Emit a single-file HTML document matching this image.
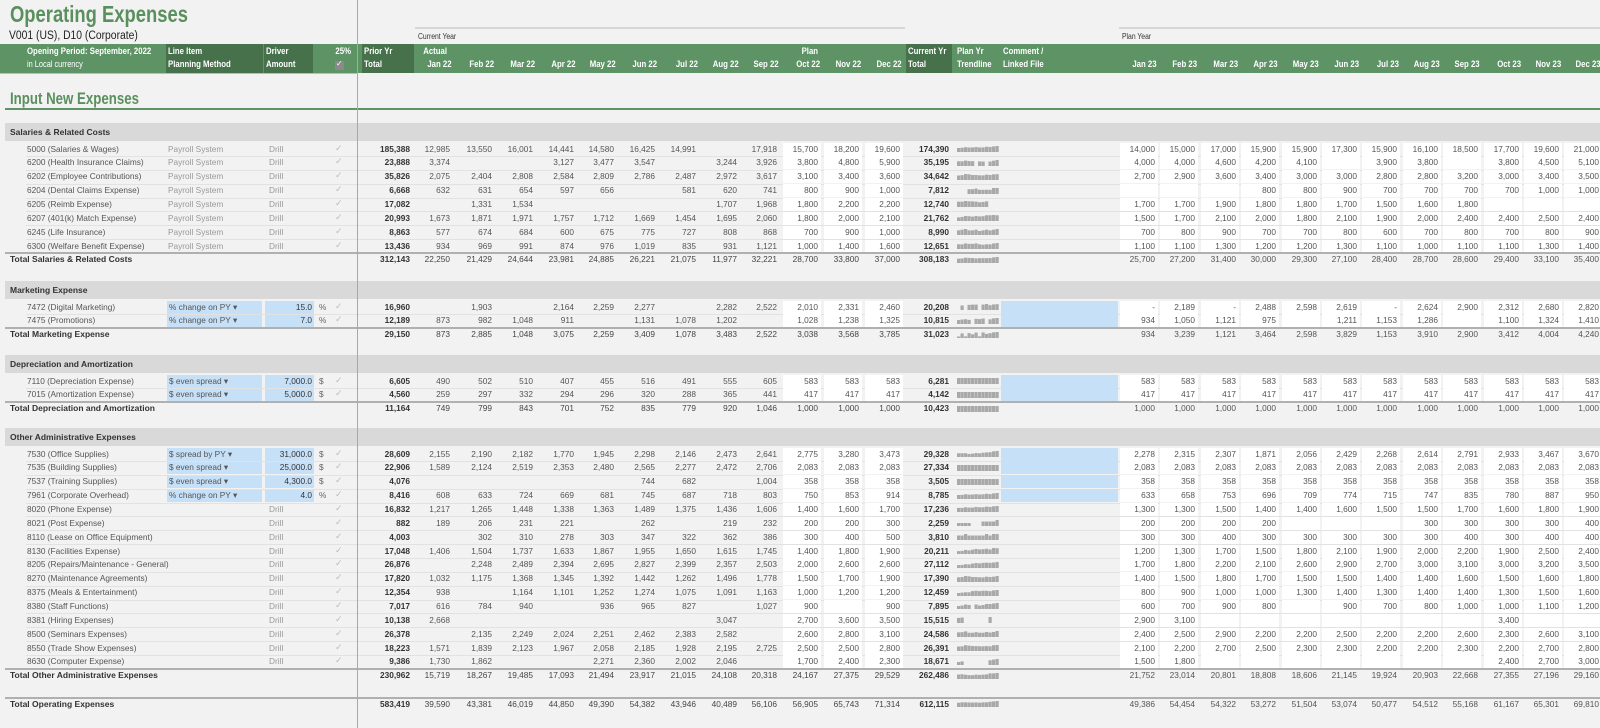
<!DOCTYPE html>
<html><head><meta charset="utf-8">
<style>
*{margin:0;padding:0;box-sizing:border-box}
body{width:1600px;height:728px;overflow:hidden;background:#f2f2f2;position:relative;font-family:"Liberation Sans",sans-serif;color:#444}
.a{position:absolute;white-space:nowrap}
.r{position:absolute;white-space:nowrap;text-align:right}
</style></head><body>
<div class="a" style="left:357px;top:0;width:1px;height:728px;background:#a8a8a8;z-index:5"></div>
<div class="a" style="left:10px;top:1px;font-size:23px;font-weight:bold;color:#5a8f5e;transform:scaleX(0.8);transform-origin:left">Operating Expenses</div>
<div class="a" style="left:9px;top:30px;font-size:11.5px;color:#222;transform:scaleX(0.9);transform-origin:left">V001 (US), D10 (Corporate)</div>
<div class="a" style="left:415px;top:27px;width:490px;height:2px;background:#d6d6d6"></div>
<div class="a" style="left:1119px;top:27px;width:481px;height:2px;background:#d6d6d6"></div>
<div class="a" style="left:418px;top:32px;font-size:8px;color:#333;transform:scaleX(0.85);transform-origin:left">Current Year</div>
<div class="a" style="left:1122px;top:32px;font-size:8px;color:#333;transform:scaleX(0.85);transform-origin:left">Plan Year</div>
<div class="a" style="left:0;top:44px;width:1600px;height:29px;background:#5e9366"></div>
<div class="a" style="left:166px;top:44px;width:97px;height:29px;background:#46714b"></div>
<div class="a" style="left:264px;top:44px;width:49px;height:29px;background:#46714b"></div>
<div class="a" style="left:362px;top:44px;width:52px;height:29px;background:#46714b"></div>
<div class="a" style="left:906px;top:44px;width:46px;height:29px;background:#46714b"></div>
<div class="a" style="left:0;top:73px;width:357px;height:1px;background:#bbb"></div>
<div id="hdr"></div>
<div class="a" style="left:10px;top:89px;font-size:17px;font-weight:bold;color:#5a8f5e;transform:scaleX(0.78);transform-origin:left">Input New Expenses</div>
<div class="a" style="left:5px;top:108px;width:1595px;height:2px;background:#5e9366"></div>
<div id="g"></div>
<script>
var H=document.getElementById('hdr'),G=document.getElementById('g'),out='';
function T(x,y,s,st,right,sx){sx=sx||1;
 if(right) out+='<div class="r" style="right:'+(1600-x)+'px;top:'+y+'px;'+st+(sx!=1?';transform:scaleX('+sx+');transform-origin:right':'')+'">'+s+'</div>';
 else out+='<div class="a" style="left:'+x+'px;top:'+y+'px;'+st+(sx!=1?';transform:scaleX('+sx+');transform-origin:left':'')+'">'+s+'</div>';}
function B(x,y,w,h,c){out+='<div class="a" style="left:'+x+'px;top:'+y+'px;width:'+w+'px;height:'+h+'px;background:'+c+'"></div>';}
var CR=[450,492,533,574,614,655,696,737,777,818,859,900];
var PR=[];for(var i=0;i<12;i++)PR.push(Math.round(1155+40.4*i));
var hs='font-size:9.5px;font-weight:bold;color:#fff';
var h1=46,h2=59;
T(27,h1,'Opening Period: September, 2022',hs,0,0.82);
T(27,h2,'in Local currency','font-size:9px;color:#fff',0,0.82);
T(168,h1,'Line Item',hs,0,0.82);T(168,h2,'Planning Method',hs,0,0.82);
T(266,h1,'Driver',hs,0,0.82);T(266,h2,'Amount',hs,0,0.82);
T(351,h1,'25%',hs,1,0.82);
B(335,61,9,9,'#8a8a8a');T(336,59,'✓','font-size:8px;color:#fff');
T(364,h1,'Prior Yr',hs,0,0.82);T(364,h2,'Total',hs,0,0.82);
T(447,h1,'Actual',hs,1,0.82);T(818,h1,'Plan',hs,1,0.82);
var m=['Jan','Feb','Mar','Apr','May','Jun','Jul','Aug','Sep','Oct','Nov','Dec'];
for(i=0;i<12;i++){T(CR[i]+2,h2,m[i]+' 22',hs,1,0.82);T(PR[i]+2,h2,m[i]+' 23',hs,1,0.82);}
T(908,h1,'Current Yr',hs,0,0.82);T(908,h2,'Total',hs,0,0.82);
T(957,h1,'Plan Yr',hs,0,0.82);T(957,h2,'Trendline',hs,0,0.82);
T(1003,h1,'Comment /',hs,0,0.82);T(1003,h2,'Linked File',hs,0,0.82);
H.innerHTML=out;out='';
var D=[
['S','Salaries & Related Costs',132],
['R','5000 (Salaries & Wages)','P','185,388|12,985|13,550|16,001|14,441|14,580|16,425|14,991|_|17,918|15,700|18,200|19,600|174,390|14,000|15,000|17,000|15,900|15,900|17,300|15,900|16,100|18,500|17,700|19,600|21,000'],
['R','6200 (Health Insurance Claims)','P','23,888|3,374|_|_|3,127|3,477|3,547|_|3,244|3,926|3,800|4,800|5,900|35,195|4,000|4,000|4,600|4,200|4,100|_|3,900|3,800|_|3,800|4,500|5,100'],
['R','6202 (Employee Contributions)','P','35,826|2,075|2,404|2,808|2,584|2,809|2,786|2,487|2,972|3,617|3,100|3,400|3,600|34,642|2,700|2,900|3,600|3,400|3,000|3,000|2,800|2,800|3,200|3,000|3,400|3,500'],
['R','6204 (Dental Claims Expense)','P','6,668|632|631|654|597|656|_|581|620|741|800|900|1,000|7,812|_|_|_|800|800|900|700|700|700|700|1,000|1,000'],
['R','6205 (Reimb Expense)','P','17,082|_|1,331|1,534|_|_|_|_|1,707|1,968|1,800|2,200|2,200|12,740|1,700|1,700|1,900|1,800|1,800|1,700|1,500|1,600|1,800|_|_|_'],
['R','6207 (401(k) Match Expense)','P','20,993|1,673|1,871|1,971|1,757|1,712|1,669|1,454|1,695|2,060|1,800|2,000|2,100|21,762|1,500|1,700|2,100|2,000|1,800|2,100|1,900|2,000|2,400|2,400|2,500|2,400'],
['R','6245 (Life Insurance)','P','8,863|577|674|684|600|675|775|727|808|868|700|900|1,000|8,990|700|800|900|700|700|800|600|700|800|700|800|900'],
['R','6300 (Welfare Benefit Expense)','P','13,436|934|969|991|874|976|1,019|835|931|1,121|1,000|1,400|1,600|12,651|1,100|1,100|1,300|1,200|1,200|1,300|1,100|1,000|1,100|1,100|1,300|1,400'],
['T','Total Salaries & Related Costs','312,143|22,250|21,429|24,644|23,981|24,885|26,221|21,075|11,977|32,221|28,700|33,800|37,000|308,183|25,700|27,200|31,400|30,000|29,300|27,100|28,400|28,700|28,600|29,400|33,100|35,400'],
['S','Marketing Expense',290],
['R','7472 (Digital Marketing)','% change on PY ▾|15.0|%','16,960|_|1,903|_|2,164|2,259|2,277|_|2,282|2,522|2,010|2,331|2,460|20,208|-|2,189|-|2,488|2,598|2,619|-|2,624|2,900|2,312|2,680|2,820'],
['R','7475 (Promotions)','% change on PY ▾|7.0|%','12,189|873|982|1,048|911|_|1,131|1,078|1,202|_|1,028|1,238|1,325|10,815|934|1,050|1,121|975|_|1,211|1,153|1,286|_|1,100|1,324|1,410'],
['T','Total Marketing Expense','29,150|873|2,885|1,048|3,075|2,259|3,409|1,078|3,483|2,522|3,038|3,568|3,785|31,023|934|3,239|1,121|3,464|2,598|3,829|1,153|3,910|2,900|3,412|4,004|4,240'],
['S','Depreciation and Amortization',364],
['R','7110 (Depreciation Expense)','$ even spread ▾|7,000.0|$','6,605|490|502|510|407|455|516|491|555|605|583|583|583|6,281|583|583|583|583|583|583|583|583|583|583|583|583'],
['R','7015 (Amortization Expense)','$ even spread ▾|5,000.0|$','4,560|259|297|332|294|296|320|288|365|441|417|417|417|4,142|417|417|417|417|417|417|417|417|417|417|417|417'],
['T','Total Depreciation and Amortization','11,164|749|799|843|701|752|835|779|920|1,046|1,000|1,000|1,000|10,423|1,000|1,000|1,000|1,000|1,000|1,000|1,000|1,000|1,000|1,000|1,000|1,000'],
['S','Other Administrative Expenses',437],
['R','7530 (Office Supplies)','$ spread by PY ▾|31,000.0|$','28,609|2,155|2,190|2,182|1,770|1,945|2,298|2,146|2,473|2,641|2,775|3,280|3,473|29,328|2,278|2,315|2,307|1,871|2,056|2,429|2,268|2,614|2,791|2,933|3,467|3,670'],
['R','7535 (Building Supplies)','$ even spread ▾|25,000.0|$','22,906|1,589|2,124|2,519|2,353|2,480|2,565|2,277|2,472|2,706|2,083|2,083|2,083|27,334|2,083|2,083|2,083|2,083|2,083|2,083|2,083|2,083|2,083|2,083|2,083|2,083'],
['R','7537 (Training Supplies)','$ even spread ▾|4,300.0|$','4,076|_|_|_|_|_|744|682|_|1,004|358|358|358|3,505|358|358|358|358|358|358|358|358|358|358|358|358'],
['R','7961 (Corporate Overhead)','% change on PY ▾|4.0|%','8,416|608|633|724|669|681|745|687|718|803|750|853|914|8,785|633|658|753|696|709|774|715|747|835|780|887|950'],
['R','8020 (Phone Expense)','D','16,832|1,217|1,265|1,448|1,338|1,363|1,489|1,375|1,436|1,606|1,400|1,600|1,700|17,236|1,300|1,300|1,500|1,400|1,400|1,600|1,500|1,500|1,700|1,600|1,800|1,900'],
['R','8021 (Post Expense)','D','882|189|206|231|221|_|262|_|219|232|200|200|300|2,259|200|200|200|200|_|_|_|300|300|300|300|400'],
['R','8110 (Lease on Office Equipment)','D','4,003|_|302|310|278|303|347|322|362|386|300|400|500|3,810|300|300|400|300|300|300|300|300|400|300|400|400'],
['R','8130 (Facilities Expense)','D','17,048|1,406|1,504|1,737|1,633|1,867|1,955|1,650|1,615|1,745|1,400|1,800|1,900|20,211|1,200|1,300|1,700|1,500|1,800|2,100|1,900|2,000|2,200|1,900|2,500|2,400'],
['R','8205 (Repairs/Maintenance - General)','D','26,876|_|2,248|2,489|2,394|2,695|2,827|2,399|2,357|2,503|2,000|2,600|2,600|27,112|1,700|1,800|2,200|2,100|2,600|2,900|2,700|3,000|3,100|3,000|3,200|3,500'],
['R','8270 (Maintenance Agreements)','D','17,820|1,032|1,175|1,368|1,345|1,392|1,442|1,262|1,496|1,778|1,500|1,700|1,900|17,390|1,400|1,500|1,800|1,700|1,500|1,500|1,400|1,400|1,600|1,500|1,600|1,800'],
['R','8375 (Meals & Entertainment)','D','12,354|938|_|1,164|1,101|1,252|1,274|1,075|1,091|1,163|1,000|1,200|1,200|12,459|800|900|1,000|1,000|1,300|1,400|1,300|1,400|1,400|1,300|1,500|1,600'],
['R','8380 (Staff Functions)','D','7,017|616|784|940|_|936|965|827|_|1,027|900|_|900|7,895|600|700|900|800|_|900|700|800|1,000|1,000|1,100|1,200'],
['R','8381 (Hiring Expenses)','D','10,138|2,668|_|_|_|_|_|_|3,047|_|2,700|3,600|3,500|15,515|2,900|3,100|_|_|_|_|_|_|_|3,400|_|_'],
['R','8500 (Seminars Expenses)','D','26,378|_|2,135|2,249|2,024|2,251|2,462|2,383|2,582|_|2,600|2,800|3,100|24,586|2,400|2,500|2,900|2,200|2,200|2,500|2,200|2,200|2,600|2,300|2,600|3,100'],
['R','8550 (Trade Show Expenses)','D','18,223|1,571|1,839|2,123|1,967|2,058|2,185|1,928|2,195|2,725|2,500|2,500|2,800|26,391|2,100|2,200|2,700|2,500|2,300|2,300|2,200|2,200|2,300|2,200|2,700|2,800'],
['R','8630 (Computer Expense)','D','9,386|1,730|1,862|_|_|2,271|2,360|2,002|2,046|_|1,700|2,400|2,300|18,671|1,500|1,800|_|_|_|_|_|_|_|2,400|2,700|3,000'],
['T','Total Other Administrative Expenses','230,962|15,719|18,267|19,485|17,093|21,494|23,917|21,015|24,108|20,318|24,167|27,375|29,529|262,486|21,752|23,014|20,801|18,808|18,606|21,145|19,924|20,903|22,668|27,355|27,196|29,160'],
['G','Total Operating Expenses','583,419|39,590|43,381|46,019|44,850|49,390|54,382|43,946|40,489|56,106|56,905|65,743|71,314|612,115|49,386|54,454|54,322|53,272|51,504|53,074|50,477|54,512|55,168|61,167|65,301|69,810']
];
var RH=13.86,y=0,fs='font-size:8.3px;';
function spark(c,vals){var nums=vals.slice(14).map(function(v){return parseFloat(v.replace(/,/g,''))||0});
 var mx=Math.max.apply(null,nums)||1;var s='<svg class="a" style="left:957px;top:'+(c-4)+'px" width="42" height="8">';
 for(var k=0;k<12;k++){var h=nums[k]?Math.max(1.5,6*nums[k]/mx):0;s+='<rect x="'+(k*3.5)+'" y="'+(7-h)+'" width="3.2" height="'+h+'" fill="#a9a9a9"/>';}
 out+=s+'</svg>';}
function vals(c,v,bold,cells){
 var ty=c-5.5;
 if(cells){for(var k=9;k<12;k++)B(CR[k]-35,c-6.5,38,13,'#fff');for(k=0;k<12;k++)B(PR[k]-35,c-6.5,38,13,'#fff');}
 T(410,ty,v[0],fs+'font-weight:bold;color:#333',1);
 for(var k=0;k<12;k++)if(v[k+1]!='_')T(CR[k],ty,v[k+1],fs+(bold?'color:#444':'color:#555'),1);
 T(949,ty,v[13],fs+'font-weight:bold;color:#333',1);
 for(k=0;k<12;k++)if(v[k+14]!='_')T(PR[k],ty,v[k+14],fs+'color:#555',1);
 spark(c,v);}
D.forEach(function(d){
 if(d[0]=='S'){var c=d[2];B(5,c-9,1595,18,'#d9d9d9');T(10,c-5.5,d[1],'font-size:8.5px;font-weight:bold;color:#333');y=c+17;return;}
 if(d[0]=='R'){var c=y;B(26,c+7,1574,1,'#e2e2e2');
  T(27,c-5.5,d[1],fs+'color:#555');
  if(d[2]=='P'||d[2]=='D'){if(d[2]=='P')T(168,c-5.5,'Payroll System',fs+'color:#999');T(269,c-5.5,'Drill',fs+'color:#999');}
  else{var p=d[2].split('|');B(167,c-6,95,12.5,'#c6e0f7');B(265,c-6,49,12.5,'#c6e0f7');
   T(169,c-5.5,p[0],fs+'color:#555');T(312,c-5.5,p[1],fs+'color:#333',1);T(319,c-5.5,p[2],fs+'color:#666');
   B(1001,c-6.5,117,13,'#c6e0f7');}
  T(335,c-6.5,'✓','font-size:9px;color:#bbb');
  vals(c,d[3].split('|'),0,1);y+=RH;return;}
 if(d[0]=='T'||d[0]=='G'){var c=d[0]=='G'?704:y;B(5,c-7.5,1595,2,'#b0b0b0');
  T(10,c-5.5,d[1],'font-size:8.5px;font-weight:bold;color:#333');vals(c,d[2].split('|'),1,0);}
});
G.innerHTML=out;
</script>
</body></html>
